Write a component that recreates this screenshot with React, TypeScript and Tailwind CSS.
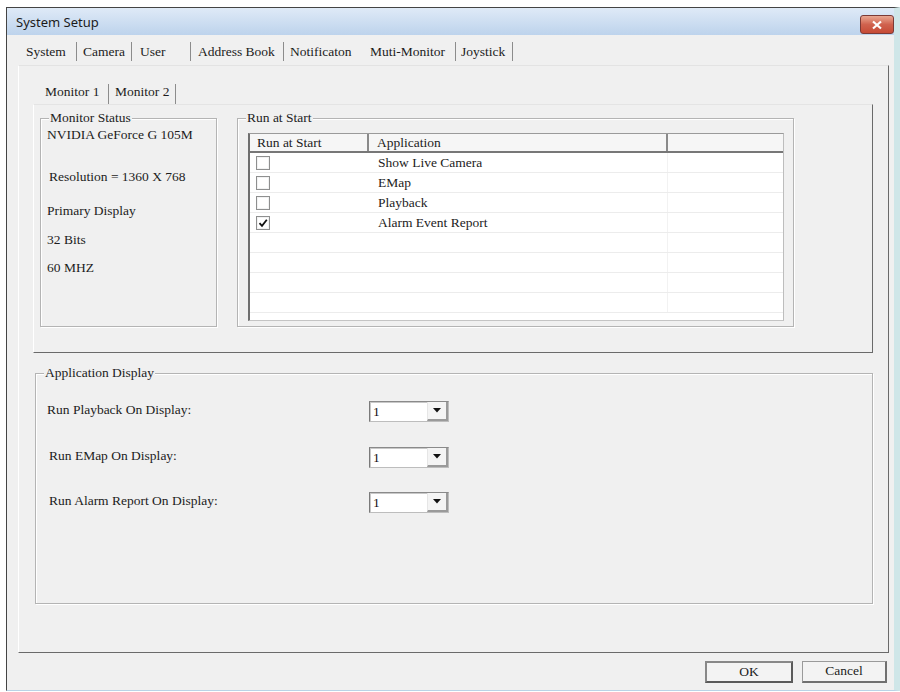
import React from "react";

const serif = { fontFamily: '"Liberation Serif", "Times New Roman", serif' };

function Sep() {
  return <div className="w-px h-[19px] bg-[#8c8c8c] self-center mt-[2px]" />;
}

function TopTabs() {
  const items: { label: string; w: number; sep?: boolean; gap?: number }[] = [
    { label: "System", w: 50, sep: true, gap: 6 },
    { label: "Camera", w: 48, sep: true, gap: 8 },
    { label: "User", w: 50, sep: true, gap: 7 },
    { label: "Address Book", w: 85, sep: true, gap: 6 },
    { label: "Notificaton", w: 80 },
    { label: "Muti-Monitor", w: 85, sep: true, gap: 5 },
    { label: "Joystick", w: 51, sep: true, gap: 0 },
  ];
  return (
    <div className="flex h-[30px] items-center pl-[19px] text-[13.5px] text-[#1c1c1c]" style={serif}>
      {items.map((it) => (
        <React.Fragment key={it.label}>
          <div className="shrink-0 leading-[16px] pt-[4px] whitespace-nowrap" style={{ width: it.w }}>
            {it.label}
          </div>
          {it.sep && <Sep />}
          {it.sep && it.gap ? <div className="shrink-0" style={{ width: it.gap }} /> : null}
        </React.Fragment>
      ))}
    </div>
  );
}

function GroupBox({
  title,
  className,
  children,
}: {
  title: string;
  className: string;
  children?: React.ReactNode;
}) {
  return (
    <div
      className={
        "relative shrink-0 border border-[#b4b4b4] shadow-[inset_1px_1px_0_#ffffff,1px_1px_0_#ffffff] " +
        className
      }
    >
      <div
        className="absolute -top-[9px] left-[8px] bg-[#f0f0f0] px-px text-[13.5px] leading-[16px] text-[#222] whitespace-nowrap"
        style={serif}
      >
        {title}
      </div>
      {children}
    </div>
  );
}

function CheckBox({ checked }: { checked?: boolean }) {
  return (
    <div className="w-[14px] h-[14px] border border-[#8e8f8f] bg-white flex items-center justify-center shadow-[inset_0_0_0_1px_#f2f2f2]">
      {checked && (
        <svg width="10" height="10" viewBox="0 0 10 10">
          <path d="M1.5 5.2 L4 7.8 L8.8 1.8" fill="none" stroke="#111" strokeWidth="1.8" />
        </svg>
      )}
    </div>
  );
}

function ListView() {
  const rows: { app: string; checked?: boolean }[] = [
    { app: "Show Live Camera" },
    { app: "EMap" },
    { app: "Playback" },
    { app: "Alarm Event Report", checked: true },
    { app: "" },
    { app: "" },
    { app: "" },
    { app: "" },
  ];
  return (
    <div
      className="ml-[10px] mt-[14px] w-[536px] h-[188px] overflow-hidden bg-white border-l-2 border-t border-r border-b border-l-[#6f6f6f] border-t-[#9a9a9a] border-r-[#bdbdbd] border-b-[#c4c4c4] text-[13.5px] text-[#1c1c1c]"
      style={serif}
    >
      <div className="flex h-[19px] bg-[#f6f6f6] border-b-2 border-[#777]">
        <div className="w-[119px] pl-[7px] leading-[17px] border-r-2 border-[#8a8a8a]">Run at Start</div>
        <div className="w-[299px] pl-[8px] leading-[17px] border-r-2 border-[#8a8a8a]">Application</div>
        <div className="flex-1" />
      </div>
      {rows.map((r, i) => (
        <div key={i} className="flex h-[20px] border-b border-[#ececec]">
          <div className="w-[119px] pl-[6px] flex items-center">
            {r.app && <CheckBox checked={r.checked} />}
          </div>
          <div className="w-[299px] pl-[9px] leading-[20px] border-r border-[#f2f2f2]">{r.app}</div>
          <div className="flex-1" />
        </div>
      ))}
    </div>
  );
}

function Dropdown() {
  return (
    <div className="flex w-[80px] h-[21px] bg-white border border-[#bdbdbd] border-l-[#7a7a7a] border-t-[#8a8a8a] shadow-[inset_1px_1px_0_#c8c8c8]">
      <div className="flex-1 pl-[3px] text-[13.5px] leading-[19px] text-[#111]" style={serif}>
        1
      </div>
      <div className="w-[21px] h-full flex items-center justify-center bg-[#f4f4f4] border-l border-[#e6e6e6] border-r-2 border-b-2 border-r-[#9a9a9a] border-b-[#9a9a9a]">
        <svg width="8" height="5" viewBox="0 0 8 5">
          <path d="M0 0 H8 L4 4.5 Z" fill="#111" />
        </svg>
      </div>
    </div>
  );
}

function DisplayRow({ label, className, indent }: { label: string; className: string; indent?: boolean }) {
  return (
    <div className={"flex items-start " + className}>
      <div
        className={
          "w-[322px] text-[13.5px] leading-[16px] text-[#1c1c1c] pt-px whitespace-nowrap " +
          (indent ? "pl-[2px]" : "")
        }
        style={serif}
      >
        {label}
      </div>
      <Dropdown />
    </div>
  );
}

function Button({ label, def }: { label: string; def?: boolean }) {
  return (
    <div
      className={
        "h-[22px] flex items-center justify-center bg-[#f3f3f3] text-[13.5px] text-[#1c1c1c] " +
        (def
          ? "w-[88px] border-2 border-[#5a5a5a] border-l-[#888] border-t-[#888]"
          : "w-[85px] border border-[#9a9a9a] border-r-2 border-b-2 border-r-[#707070] border-b-[#707070]")
      }
      style={serif}
    >
      {label}
    </div>
  );
}

export default function App() {
  return (
    <div className="w-[900px] h-[692px] bg-white overflow-hidden pt-[7px]">
      <div className="ml-[6px] w-[894px] h-[684px] flex flex-col bg-[#f0f0f0] border-l border-t border-[#444] border-r-[6px] border-r-[#cfe6e8] border-b border-b-[#b9d3e6]">
        {/* title bar */}
        <div className="h-[27px] shrink-0 flex items-center justify-between bg-gradient-to-b from-[#dfeaf7] to-[#bdd3ec] pl-[9px] pr-0">
          <div
            className="text-[13px] text-[#1b1b1b] pt-[2px]"
            style={{ fontFamily: '"Noto Sans", "Open Sans", sans-serif' }}
          >
            System Setup
          </div>
          <div className="w-[34px] h-[19px] mt-[6px] rounded-[3px] border border-[#7b3a36] bg-gradient-to-b from-[#e9a792] via-[#d0624e] to-[#c64a35] flex items-center justify-center">
            <svg width="12" height="10" viewBox="0 0 12 10">
              <path d="M2 1.5 L10 8.5 M10 1.5 L2 8.5" stroke="#fff" strokeWidth="2.2" />
            </svg>
          </div>
        </div>

        {/* body */}
        <TopTabs />

        {/* outer tab panel */}
        <div className="ml-[11px] w-[871px] h-[588px] border border-t-[#e3e3e3] border-l-[#ffffff] border-r-[#6a6a6a] border-b-[#6a6a6a] flex flex-col">
          {/* monitor tabs */}
          <div className="flex items-end h-[38px] pl-[26px] text-[13.5px] text-[#1c1c1c]" style={serif}>
            <div className="w-[63px] leading-[16px] pb-[4px] whitespace-nowrap">Monitor 1</div>
            <div className="w-px h-[20px] bg-[#8c8c8c]" />
            <div className="w-[6px]" />
            <div className="w-[60px] leading-[16px] pb-[4px] whitespace-nowrap">Monitor 2</div>
            <div className="w-px h-[20px] bg-[#8c8c8c]" />
          </div>

          {/* inner panel */}
          <div className="ml-[14px] w-[840px] h-[249px] border border-t-[#e4e4e4] border-l-[#ffffff] border-r-[#6a6a6a] border-b-[#6a6a6a] flex items-start pt-[13px] pl-[6px]">
            <GroupBox title="Monitor Status" className="w-[177px] h-[209px]">
              <div className="flex flex-col pt-[8px] pl-[6px] text-[13.5px] leading-[16px] text-[#1c1c1c] whitespace-nowrap" style={serif}>
                <div>NVIDIA GeForce G 105M</div>
                <div className="mt-[26px] ml-[2px]">Resolution = 1360 X 768</div>
                <div className="mt-[18px]">Primary Display</div>
                <div className="mt-[13px]">32 Bits</div>
                <div className="mt-[12px]">60 MHZ</div>
              </div>
            </GroupBox>
            <div className="w-[20px] shrink-0" />
            <GroupBox title="Run at Start" className="w-[557px] h-[209px]">
              <ListView />
            </GroupBox>
          </div>

          {/* application display */}
          <div className="mt-[20px] ml-[16px]">
            <GroupBox title="Application Display" className="w-[838px] h-[231px]">
              <div className="flex flex-col pl-[11px]">
                <DisplayRow label="Run Playback On Display:" className="mt-[27px]" />
                <DisplayRow label="Run EMap On Display:" className="mt-[25px]" indent />
                <DisplayRow label="Run Alarm Report On Display:" className="mt-[24px]" indent />
              </div>
            </GroupBox>
          </div>
        </div>

        {/* buttons */}
        <div className="flex justify-end gap-[9px] mt-[8px] pr-[7px]">
          <Button label="OK" def />
          <Button label="Cancel" />
        </div>
      </div>
    </div>
  );
}
